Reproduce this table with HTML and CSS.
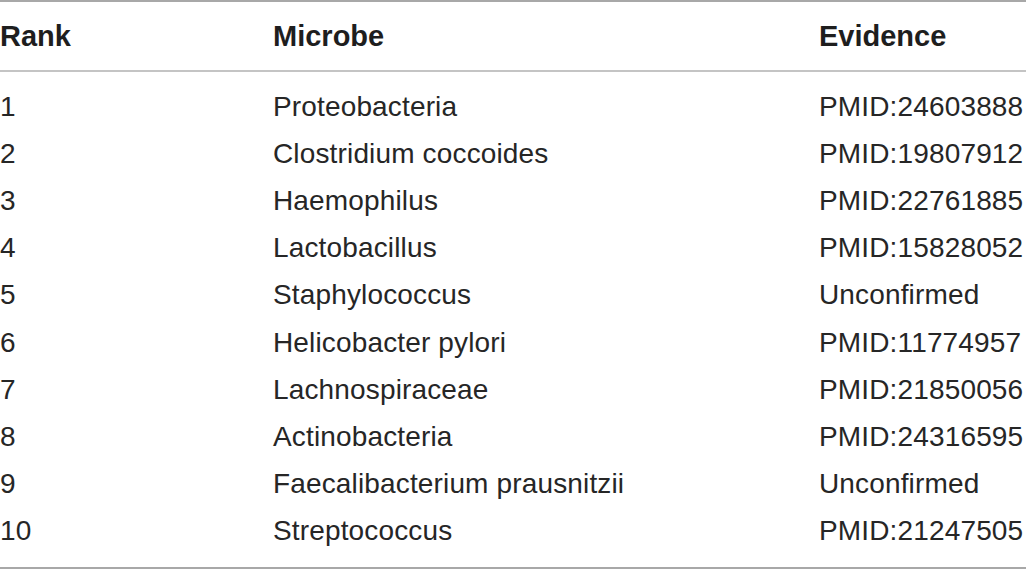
FILE: index.html
```html
<!DOCTYPE html>
<html>
<head>
<meta charset="utf-8">
<link rel="stylesheet" href="styles.css">
</head>
<body>
<div class="table">
  <div class="head row">
    <div>Rank</div><div>Microbe</div><div>Evidence</div>
  </div>
  <div class="body">
    <div class="row"><div>1</div><div>Proteobacteria</div><div>PMID:24603888</div></div>
    <div class="row"><div>2</div><div>Clostridium coccoides</div><div>PMID:19807912</div></div>
    <div class="row"><div>3</div><div>Haemophilus</div><div>PMID:22761885</div></div>
    <div class="row"><div>4</div><div>Lactobacillus</div><div>PMID:15828052</div></div>
    <div class="row"><div>5</div><div>Staphylococcus</div><div>Unconfirmed</div></div>
    <div class="row"><div>6</div><div>Helicobacter pylori</div><div>PMID:11774957</div></div>
    <div class="row"><div>7</div><div>Lachnospiraceae</div><div>PMID:21850056</div></div>
    <div class="row"><div>8</div><div>Actinobacteria</div><div>PMID:24316595</div></div>
    <div class="row"><div>9</div><div>Faecalibacterium prausnitzii</div><div>Unconfirmed</div></div>
    <div class="row"><div>10</div><div>Streptococcus</div><div>PMID:21247505</div></div>
  </div>
</div>
</body>
</html>
```

FILE: styles.css
```css
html, body {
  margin: 0;
  padding: 0;
  background: #ffffff;
}
body {
  font-family: "Liberation Sans", Arial, Helvetica, sans-serif;
  color: #262626;
}
.table {
  width: 1026px;
  border-top: 2px solid #a8a8a8;
  border-bottom: 2px solid #a8a8a8;
  box-sizing: border-box;
}
.row {
  display: grid;
  grid-template-columns: 273px 546px 1fr;
  align-items: center;
}
.head {
  height: 68px;
  font-weight: bold;
  font-size: 29px;
  color: #1e1e1e;
  border-bottom: 2px solid #c4c4c4;
}
.body {
  padding: 11px 0 12px;
  font-size: 28px;
  letter-spacing: 0.15px;
}
.body .row {
  height: 47.2px;
}
```
